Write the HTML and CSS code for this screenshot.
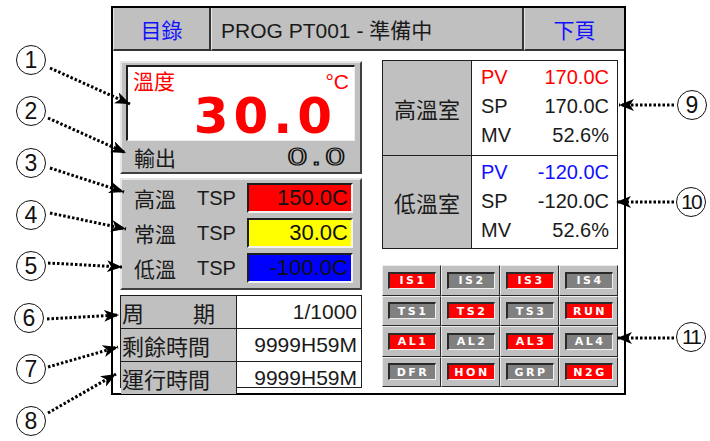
FILE: index.html
```html
<!DOCTYPE html>
<html>
  <head>
    <meta charset="utf-8">
    <title>PROG PT001</title>
    <link rel="stylesheet" href="styles.css">
  </head>
<body>
<div class = 'stage'>
  <div class = 'screen'>
    <div class = 'topbar'>
      <div class = 'tb-cell tb-left'>目錄</div>
      <div class = 'tb-cell tb-mid'>PROG PT001 - 準備中</div>
      <div class = 'tb-cell tb-right'>下頁</div>
    </div>

    <div class = 'main'>
      <div class = 'col-left'>
        <div class = 'panel temp'>
          <div class = 'display'>
            <div class = 'disp-head'><span>溫度</span><span>°C</span></div>
            <div class = 'big'>30.0</div>
          </div>
          <div class = 'out-row'><span>輸出</span><span class = 'hollow'>0.0</span></div>
        </div>

        <div class = 'panel tsp'>
          <div class = 'tsp-row'>
            <span class = 'tsp-lbl'>高溫</span><span class = 'tsp-key'>TSP</span>
            <span class = 'tsp-val red'>150.0C</span>
          </div>
          <div class = 'tsp-row'>
            <span class = 'tsp-lbl'>常溫</span><span class = 'tsp-key'>TSP</span>
            <span class = 'tsp-val yellow'>30.0C</span>
          </div>
          <div class = 'tsp-row'>
            <span class = 'tsp-lbl'>低溫</span><span class = 'tsp-key'>TSP</span>
            <span class = 'tsp-val blue'>-100.0C</span>
          </div>
        </div>

        <div class = 'timetable'>
          <div class = 'tt-key'><span class = 'spread'><span>周</span><span>期</span></span></div>
          <div class = 'tt-val'>1/1000</div>
          <div class = 'tt-key'>剩餘時間</div>
          <div class = 'tt-val'>9999H59M</div>
          <div class = 'tt-key last'>運行時間</div>
          <div class = 'tt-val last'>9999H59M</div>
        </div>
      </div>

      <div class = 'col-right'>
        <div class = 'chambers'>
          <div class = 'ch-name'>高溫室</div>
          <div class = 'ch-vals'>
            <div class = 'ch-line pv-hot'><span>PV</span><span>170.0C</span></div>
            <div class = 'ch-line'><span>SP</span><span>170.0C</span></div>
            <div class = 'ch-line'><span>MV</span><span>52.6%</span></div>
          </div>
          <div class = 'ch-name second'>低溫室</div>
          <div class = 'ch-vals second'>
            <div class = 'ch-line pv-cold'><span>PV</span><span>-120.0C</span></div>
            <div class = 'ch-line'><span>SP</span><span>-120.0C</span></div>
            <div class = 'ch-line'><span>MV</span><span>52.6%</span></div>
          </div>
        </div>

        <div class = 'status'>
          <div class = 'st-cell'><span class = 'lamp on'>IS1</span></div>
          <div class = 'st-cell'><span class = 'lamp'>IS2</span></div>
          <div class = 'st-cell'><span class = 'lamp on'>IS3</span></div>
          <div class = 'st-cell'><span class = 'lamp'>IS4</span></div>
          <div class = 'st-cell'><span class = 'lamp'>TS1</span></div>
          <div class = 'st-cell'><span class = 'lamp on'>TS2</span></div>
          <div class = 'st-cell'><span class = 'lamp'>TS3</span></div>
          <div class = 'st-cell'><span class = 'lamp on'>RUN</span></div>
          <div class = 'st-cell'><span class = 'lamp on'>AL1</span></div>
          <div class = 'st-cell'><span class = 'lamp'>AL2</span></div>
          <div class = 'st-cell'><span class = 'lamp on'>AL3</span></div>
          <div class = 'st-cell'><span class = 'lamp'>AL4</span></div>
          <div class = 'st-cell'><span class = 'lamp'>DFR</span></div>
          <div class = 'st-cell'><span class = 'lamp on'>HON</span></div>
          <div class = 'st-cell'><span class = 'lamp'>GRP</span></div>
          <div class = 'st-cell'><span class = 'lamp on'>N2G</span></div>
        </div>
      </div>
    </div>
  </div>

  <!-- callout arrows -->
  <svg class = 'leaders' width = '710' height = '441' viewBox = '0 0 710 441'>
    <defs>
      <marker id = 'tip' markerUnits = 'userSpaceOnUse' markerWidth = '16' markerHeight = '12' refX = '15' refY = '6' orient = 'auto'>
        <path d = 'M0,0 L15,6 L0,12 L4,6 Z' fill = '#000'/>
      </marker>
    </defs>
    <g stroke = '#000' stroke-width = '3' stroke-dasharray = '2.5 2' fill = 'none' marker-end = 'url(#tip)'>
      <line x1 = '50' y1 = '68' x2 = '130' y2 = '104'/>
      <line x1 = '48' y1 = '118' x2 = '126' y2 = '153'/>
      <line x1 = '50' y1 = '168' x2 = '124' y2 = '192'/>
      <line x1 = '50' y1 = '213' x2 = '126' y2 = '229'/>
      <line x1 = '48' y1 = '263' x2 = '122' y2 = '267'/>
      <line x1 = '47' y1 = '319' x2 = '119' y2 = '315'/>
      <line x1 = '48' y1 = '367' x2 = '118' y2 = '347'/>
      <line x1 = '48' y1 = '413' x2 = '116' y2 = '374'/>
      <line x1 = '674' y1 = '105' x2 = '619' y2 = '105'/>
      <line x1 = '674' y1 = '202' x2 = '616' y2 = '202'/>
      <line x1 = '674' y1 = '338' x2 = '617' y2 = '338'/>
    </g>
  </svg>
  <div class = 'mark' style = 'left: 16px; top: 45px'>1</div>
  <div class = 'mark' style = 'left: 16px; top: 96px'>2</div>
  <div class = 'mark' style = 'left: 16px; top: 148px'>3</div>
  <div class = 'mark' style = 'left: 16px; top: 200px'>4</div>
  <div class = 'mark' style = 'left: 16px; top: 251px'>5</div>
  <div class = 'mark' style = 'left: 14px; top: 303px'>6</div>
  <div class = 'mark' style = 'left: 16px; top: 354px'>7</div>
  <div class = 'mark' style = 'left: 16px; top: 406px'>8</div>
  <div class = 'mark' style = 'left: 677px; top: 90px'>9</div>
  <div class = 'mark two' style = 'left: 676px; top: 187px'>10</div>
  <div class = 'mark two' style = 'left: 676px; top: 322px'>11</div>
</div>
</body>
</html>
```

FILE: styles.css
```css
:root {
  --panel: #c0c0c0;
  --line: #1e1e1e;
  --lite: #e6e6e6;
}

body {
  margin: 0;
  background: #fff;
  color: #1a1a1a;
  font-family: "Liberation Sans", "Noto Sans CJK TC", sans-serif;
}

.stage {
  position: relative;
  box-sizing: border-box;
  width: 710px;
  height: 441px;
  padding: 6px 0 0 111px;
  overflow: hidden;
}

.screen {
  box-sizing: border-box;
  width: 515px;
  height: 389px;
  border: 2px solid #000;
  display: flex;
  flex-direction: column;
}

/* top bar */
.topbar {
  display: flex;
  height: 43px;
}

.tb-cell {
  box-sizing: border-box;
  background: var(--panel);
  border-left: 1px solid var(--lite);
  border-right: 2px solid #333;
  border-bottom: 2px solid #333;
  display: flex;
  align-items: center;
  font-size: 21px;
}

.tb-left {
  width: 98px;
  justify-content: center;
  color: #1010ff;
}

.tb-mid {
  width: 313px;
  padding-left: 9px;
}

.tb-right {
  width: 100px;
  justify-content: center;
  color: #1010ff;
  border-right: 0;
}

/* body */
.main {
  flex: 1;
  display: flex;
  gap: 20px;
  padding: 9px 6px 0 7px;
}

.col-left {
  width: 242px;
  padding-top: 1px;
  display: flex;
  flex-direction: column;
}

.col-right {
  width: 236px;
  display: flex;
  flex-direction: column;
}

.panel {
  box-sizing: border-box;
  background: var(--panel);
  border: 2px solid;
  border-color: var(--lite) #404040 #404040 var(--lite);
}

.temp {
  height: 113px;
  padding: 2px 5px 0 4px;
}

.display {
  box-sizing: border-box;
  height: 76px;
  background: #fff;
  border-top: 2px solid var(--line);
  border-left: 2px solid var(--line);
  border-right: 1px solid #eee;
  border-bottom: 1px solid #eee;
}

.disp-head {
  box-sizing: border-box;
  height: 26px;
  padding: 4px 5px 0 5px;
  display: flex;
  justify-content: space-between;
  color: #ff0000;
  font-size: 21px;
  line-height: 22px;
}

.big {
  margin-top: 3px;
  text-align: right;
  padding-right: 17px;
  color: #ff0000;
  font-family: "DejaVu Sans", sans-serif;
  font-weight: bold;
  font-size: 50px;
  line-height: 40px;
  letter-spacing: 5px;
}

.out-row {
  height: 31px;
  padding: 0 6px 0 8px;
  display: flex;
  justify-content: space-between;
  align-items: center;
  font-size: 21px;
}

.hollow {
  display: inline-block;
  font-family: "DejaVu Sans", sans-serif;
  font-size: 23px;
  letter-spacing: 2px;
  color: transparent;
  -webkit-text-stroke: 1.2px #111;
  transform: scaleX(1.45);
  transform-origin: right center;
}

/* TSP panel */
.tsp {
  height: 112px;
  margin-top: 4px;
  padding: 3px 7px 0 12px;
  display: flex;
  flex-direction: column;
  gap: 5px;
}

.tsp-row {
  display: flex;
  align-items: center;
  height: 30px;
}

.tsp-lbl {
  width: 63px;
  font-size: 21px;
}

.tsp-key {
  width: 50px;
  font-size: 20px;
}

.tsp-val {
  box-sizing: border-box;
  width: 106px;
  height: 30px;
  padding-right: 3px;
  border-top: 2px solid var(--line);
  border-left: 2px solid var(--line);
  border-right: 2px solid #f2f2f2;
  border-bottom: 2px solid #f2f2f2;
  text-align: right;
  font-size: 22px;
  line-height: 26px;
  color: #111;
}

.tsp-val.red { background: #ff0000; }
.tsp-val.yellow { background: #ffff00; }
.tsp-val.blue { background: #0000ff; }

/* time table */
.timetable {
  box-sizing: border-box;
  margin-top: 5px;
  height: 93px;
  display: grid;
  grid-template-columns: 116px 1fr;
  grid-template-rows: repeat(3, 1fr);
  border: 1px solid var(--line);
}

.tt-key, .tt-val {
  display: flex;
  align-items: center;
  border-bottom: 1px solid var(--line);
}

.tt-key {
  background: var(--panel);
  border-right: 1px solid var(--line);
  padding-left: 1px;
  font-size: 22px;
}

.tt-val {
  justify-content: flex-end;
  padding-right: 4px;
  font-size: 21px;
}

.tt-key.last, .tt-val.last {
  border-bottom: 0;
}

.spread {
  width: 93px;
  display: flex;
  justify-content: space-between;
}

/* chambers */
.chambers {
  box-sizing: border-box;
  height: 189px;
  display: grid;
  grid-template-columns: 89px 1fr;
  grid-template-rows: 1fr 1fr;
  border: 1px solid var(--line);
}

.ch-name {
  background: var(--panel);
  border-right: 1px solid var(--line);
  display: flex;
  align-items: center;
  justify-content: center;
  font-size: 22px;
}

.ch-vals {
  padding: 2px 8px 0 9px;
  font-size: 20px;
  line-height: 29px;
}

.second {
  border-top: 1px solid var(--line);
}

.ch-line {
  display: flex;
  justify-content: space-between;
}

.pv-hot { color: #ff0000; }
.pv-cold { color: #1010ff; }

/* status lamps */
.status {
  margin-top: 16px;
  height: 122px;
  display: grid;
  grid-template-columns: repeat(4, 1fr);
  grid-template-rows: repeat(4, 1fr);
}

.st-cell {
  background: var(--panel);
  border: 1px solid;
  border-color: #ededed #2a2a2a #2a2a2a #ededed;
  display: flex;
  align-items: center;
  justify-content: center;
}

.lamp {
  box-sizing: border-box;
  width: 48px;
  height: 17px;
  background: #808080;
  border-top: 2px solid #2a2a2a;
  border-left: 2px solid #2a2a2a;
  border-right: 1px solid #f0f0f0;
  border-bottom: 1px solid #f0f0f0;
  display: flex;
  align-items: center;
  justify-content: center;
  color: #fff;
  font-family: "DejaVu Sans", sans-serif;
  font-weight: bold;
  font-size: 11px;
  letter-spacing: 2.5px;
  padding-left: 2px;
}

.lamp.on { background: #ff0000; }

/* callouts */
.leaders {
  position: absolute;
  left: 0;
  top: 0;
  pointer-events: none;
}

.mark {
  position: absolute;
  box-sizing: border-box;
  width: 30px;
  height: 30px;
  border: 1.5px solid #111;
  border-radius: 50%;
  display: flex;
  align-items: center;
  justify-content: center;
  font-size: 23px;
  color: #111;
  background: #fff;
}

.mark.two {
  font-size: 21px;
  letter-spacing: -2px;
}
```
